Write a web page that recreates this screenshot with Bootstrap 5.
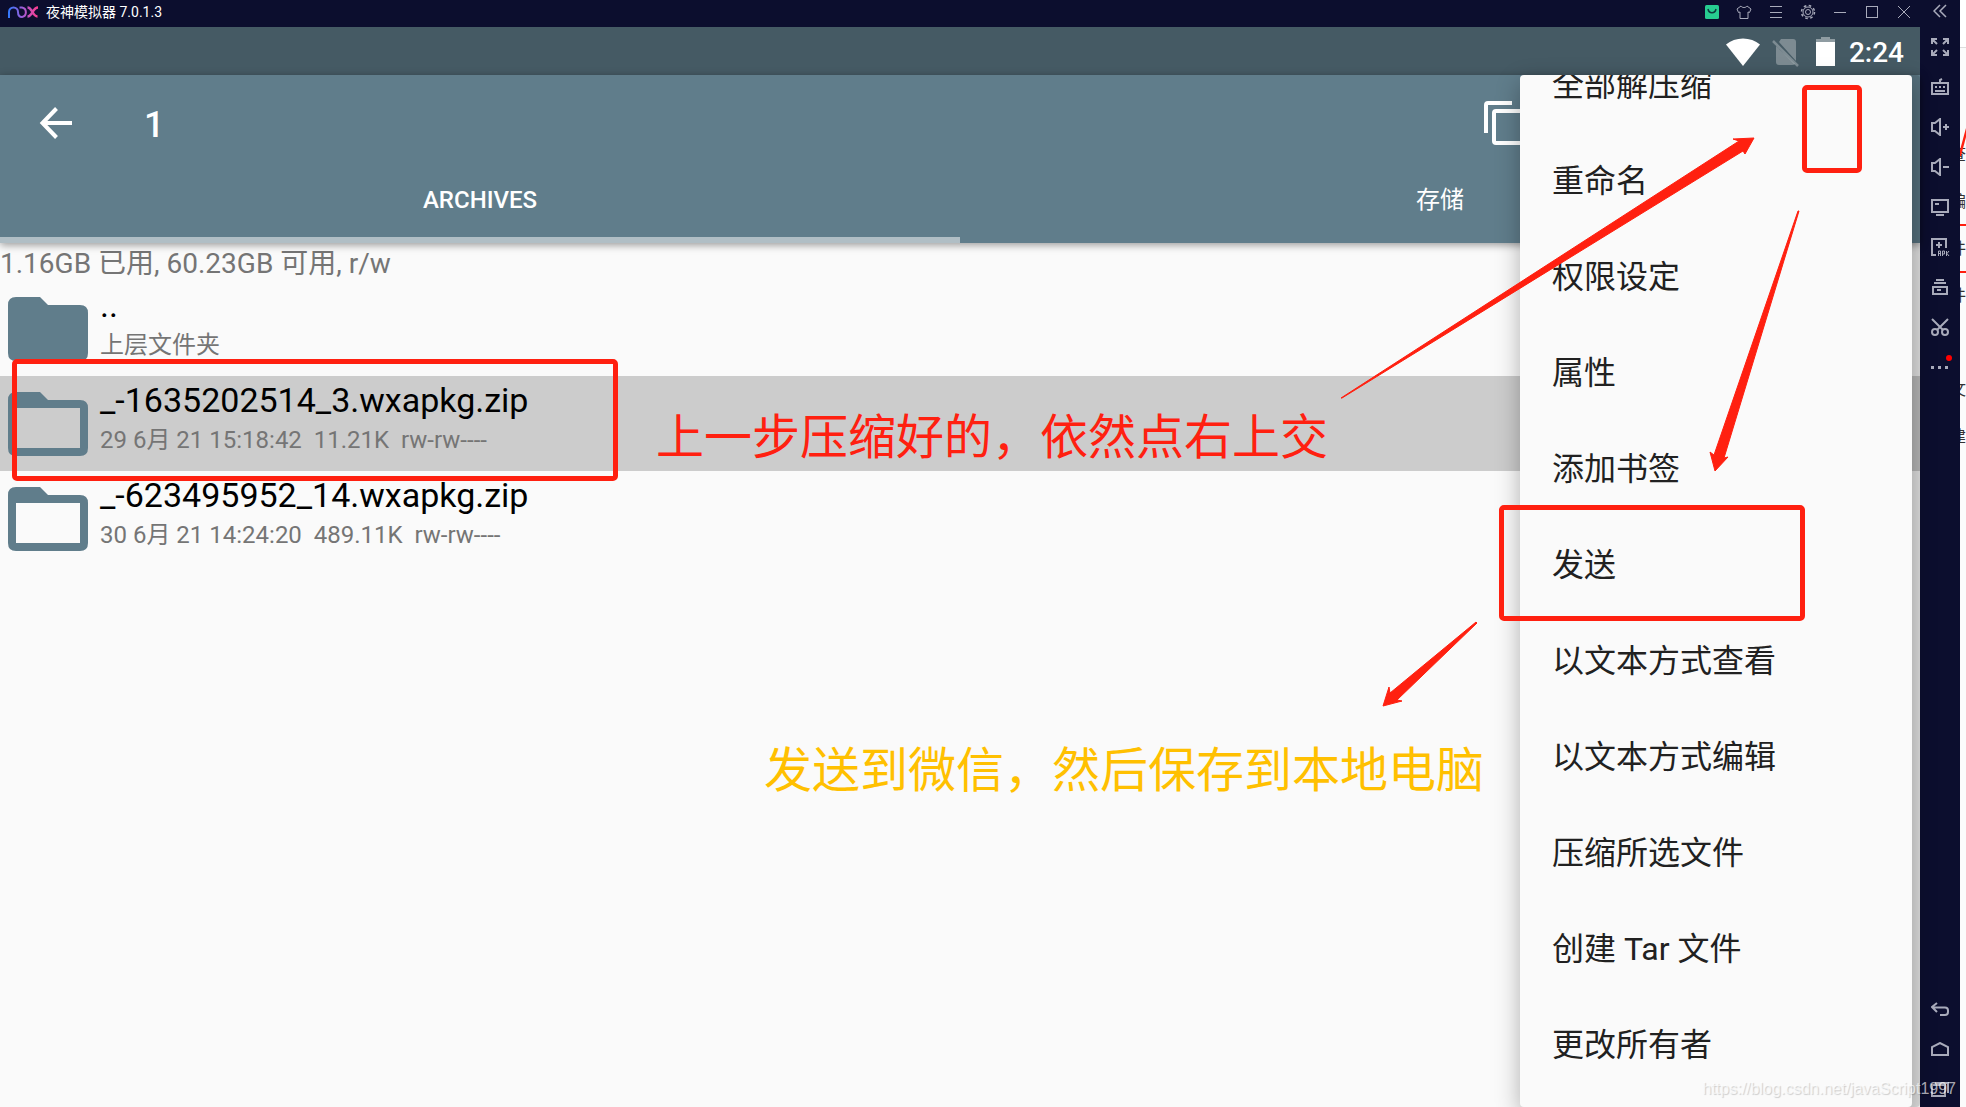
<!DOCTYPE html>
<html lang="zh-CN">
<head>
<meta charset="utf-8">
<meta name="viewport" content="width=device-width, initial-scale=1">
<title>夜神模拟器</title>
<link href="https://cdn.jsdelivr.net/npm/bootstrap@5.3.0/dist/css/bootstrap.min.css" rel="stylesheet">
<style>
:root{--navy:#0c0e2e;--slate:#607d8b;--ink:#212121;--mute:#757575;--red:#ff2010}
body{font-family:Roboto,"Noto Sans CJK SC",sans-serif;background:#fafafa;color:var(--ink)}
svg{display:block;flex:none}
button{font-family:inherit}
.bare{background:none;border:0;padding:0;color:inherit}
.emu{background:var(--navy);min-width:0}
.titlebar{height:27px;color:#fff;font-size:14px;line-height:20px;padding-left:8px;padding-bottom:4px;font-family:Roboto,"Noto Sans CJK SC",sans-serif}
.win-btn{width:32px;height:22px;color:#a9abbb;display:flex;align-items:center;justify-content:center}
.win-btn.wide{width:40px}
.statusbar{height:48px;background:#455a64;color:#fff;padding-right:16px;padding-top:2px}
.clock{font-size:28px;line-height:46px;font-weight:500;margin-left:13px;padding-top:1px}
.screen{min-height:0;background:#fafafa}
.appbar{background:var(--slate);color:#fff;box-shadow:0 2px 8px rgba(0,0,0,.4);z-index:1}
.toolbar{height:96px;padding-left:36px}
.count{font-size:36px;line-height:48px;font-weight:500;margin-left:68px;padding-top:4px}
.copy-btn{margin-left:auto;margin-right:400px}
.copy-btn svg{overflow:visible}
.tab-btn{height:72px;font-size:24px;line-height:36px;font-weight:500;padding-bottom:8px;border-bottom:6px solid transparent}
.tab-btn.plain{font-weight:400}
.tab-btn.current{border-color:#b0bec5}
.usage{font-size:28px;line-height:34px;padding-top:4px;color:var(--mute)}
.entry{height:95px;padding:0 8px;gap:12px;width:100%;text-align:left}
.entry.picked{background:#ccc}
.entry svg{margin-top:16px}
.entry-name{font-size:34px;line-height:48px;color:#000}
.entry-meta{font-size:24px;line-height:32px;color:var(--mute);white-space:pre}
.popup{position:absolute;top:0;right:8px;bottom:0;width:392px;z-index:2;border-radius:4px;background:#fafafa;
  box-shadow:8px 0 0 rgba(0,0,0,.12),0 8px 24px rgba(0,0,0,.3)}
.popup-list{padding-bottom:14px;border-radius:4px}
.popup-item{height:96px;flex:none;padding-left:32px;text-align:left;font-size:32px;line-height:48px}
.sidebar{width:40px;background:var(--navy);color:#a9abbb}
.sidebar .win-btn{margin-bottom:5px}
.side-btn{height:40px;flex:none;display:flex;align-items:center;justify-content:center;position:relative}
.side-nav{margin-top:auto;margin-bottom:-2px}
.dot{position:absolute;width:6px;height:6px;border-radius:50%;background:#f00;right:8px;top:8px}
.behind{width:6px;background:#fbfbfb;padding-top:132px;font-size:16px;line-height:45px;color:#333;position:relative}
.behind span{height:47px;border-bottom:2px solid transparent}
.behind span.ruled{border-color:var(--red)}
.behind-top{position:absolute;top:0;left:0;right:0;height:48px;background:#fff;border-bottom:1px solid #ddd}
.behind svg{position:absolute;left:0;top:128px}
.notes{position:absolute;inset:0;z-index:3;pointer-events:none}
.frame{position:absolute;border:5px solid var(--red);border-radius:5px}
.frame-file{left:12px;top:359px;width:606px;height:122px}
.frame-more{right:104px;top:85px;width:60px;height:88px}
.frame-send{right:161px;top:505px;width:306px;height:116px}
.remark{position:absolute;font-family:"Noto Sans CJK SC",sans-serif;font-size:48px;line-height:64px;white-space:nowrap}
.remark-a{left:656px;top:401px;color:var(--red)}
.remark-b{left:764px;top:734px;color:#ffc000}
.stamp{position:absolute;right:10px;bottom:7px;z-index:4;font:16px/22px "Liberation Sans",sans-serif;color:rgba(255,255,255,.65);text-shadow:1px 1px 1px rgba(0,0,0,.18);pointer-events:none}
</style>
<script src="https://cdn.jsdelivr.net/npm/bootstrap@5.3.0/dist/js/bootstrap.bundle.min.js"></script>
</head>
<body>
<div class="d-flex vh-100 overflow-hidden position-relative">
  <div class="emu flex-grow-1 d-flex flex-column">
    <header class="titlebar d-flex align-items-center">
      <svg width="30" height="12" viewBox="0 0 30 12" fill="none" stroke-width="2" aria-hidden="true">
        <defs><linearGradient id="lg" gradientUnits="userSpaceOnUse" x1="0" y1="0" x2="30" y2="0"><stop offset="0" stop-color="#2f7bff"/><stop offset=".5" stop-color="#a45cd6"/><stop offset="1" stop-color="#ff3b8d"/></linearGradient></defs>
        <path stroke="url(#lg)" d="M1 12V6a4.500 4.500 0 0 1 9 0c0 3 1 5 4 5A4.500 4.800 0 0 0 14 1.500h-2.500"/>
        <path stroke="url(#lg)" stroke-width="2.500" d="M19.500 1.500c5 0 5 9 10 9M30 1.500c-5.500 0-5.500 9-10.500 9"/>
      </svg>
      <span class="ms-2">夜神模拟器 7.0.1.3</span>
      <div class="d-flex ms-auto">
        <button class="bare win-btn" aria-label="应用商店"><svg width="14" height="14"><rect width="14" height="14" rx="1.500" fill="#27cc91"/><path d="M3 4c1 5 7 5 8 0" fill="none" stroke="#0c3a3e" stroke-width="1.500"/></svg></button>
        <button class="bare win-btn" aria-label="主题"><svg width="16" height="14" fill="none" stroke="currentColor"><path d="M5 1 1 4l1.500 3.500L4 7v6.500h8V7l1.500.500L15 4l-4-3c-1 2-5 2-6 0z"/></svg></button>
        <button class="bare win-btn" aria-label="菜单"><svg width="12" height="12" stroke="currentColor"><path d="M0 .5h12M0 6.500h12M0 11.500h12"/></svg></button>
        <button class="bare win-btn" aria-label="设置"><svg width="16" height="16" fill="none" stroke="currentColor"><circle cx="8" cy="8" r="2.500"/><circle cx="8" cy="8" r="5"/><circle cx="8" cy="8" r="6.500" stroke-width="1.500" stroke-dasharray="2.600 2.500"/></svg></button>
        <button class="bare win-btn" aria-label="最小化"><svg width="12" height="12" stroke="currentColor"><path d="M0 6.500h12"/></svg></button>
        <button class="bare win-btn" aria-label="最大化"><svg width="12" height="12" fill="none" stroke="currentColor"><rect x=".5" y=".5" width="11" height="11"/></svg></button>
        <button class="bare win-btn" aria-label="关闭"><svg width="12" height="12" stroke="currentColor"><path d="M0 0l12 12M12 0 0 12"/></svg></button>
      </div>
    </header>
    <div class="statusbar d-flex align-items-center justify-content-end">
      <svg width="34" height="28"><path fill="#fff" d="M0 6.500C9-1.500 25-1.500 34 6.500L17 28z"/></svg>
      <svg class="ms-2 me-3" width="32" height="30" viewBox="-4 0 32 30"><path fill="#fff" fill-opacity=".3" d="M9 2h12q3 0 3 3v19L7 5zM4 9l19 18q-1 1-3 1H7q-3 0-3-3z"/><path stroke="#fff" stroke-opacity=".3" stroke-width="2.500" d="M1 4l25 25"/></svg>
      <svg width="20" height="30"><path fill="#fff" fill-opacity=".4" d="M5 0h9v2h5v4H0V2h5z"/><path fill="#fff" d="M0 5h19v24H0z"/></svg>
      <span class="clock">2:24</span>
    </div>
    <main class="screen flex-grow-1 position-relative d-flex flex-column">
      <div class="appbar">
        <div class="toolbar d-flex align-items-center">
          <button class="bare" aria-label="返回"><svg width="40" height="36" fill="none" stroke="#fff" stroke-width="4"><path d="M20.500 3.500 6.500 18l14 14.500M6 18h30"/></svg></button>
          <span class="count">1</span>
          <button class="bare copy-btn" aria-label="复制"><svg width="44" height="48" fill="none" stroke="#fff" stroke-width="4"><path d="M36 4H12q-2 0-2 2v28"/><rect x="18" y="12" width="28" height="32" rx="2"/></svg></button>
        </div>
        <nav class="d-flex">
          <button class="bare tab-btn current w-50">ARCHIVES</button>
          <button class="bare tab-btn plain w-50">存储</button>
        </nav>
      </div>
      <div class="usage">1.16GB 已用, 60.23GB 可用, r/w</div>
      <button class="bare entry d-flex">
        <svg width="80" height="64" fill="#607d8b"><path d="M8 0h24l8 8h32q8 0 8 8v40q0 8-8 8H8q-8 0-8-8V8q0-8 8-8z"/></svg>
        <span class="d-flex flex-column"><span class="entry-name">..</span><span class="entry-meta">上层文件夹</span></span>
      </button>
      <button class="bare entry picked d-flex">
        <svg width="80" height="64" fill="#607d8b" fill-rule="evenodd"><path d="M8 0h24l8 8h32q8 0 8 8v40q0 8-8 8H8q-8 0-8-8V8q0-8 8-8zM8 16v40h64V16z"/></svg>
        <span class="d-flex flex-column"><span class="entry-name">_-1635202514_3.wxapkg.zip</span><span class="entry-meta">29 6月 21 15:18:42  11.21K  rw-rw----</span></span>
      </button>
      <button class="bare entry d-flex">
        <svg width="80" height="64" fill="#607d8b" fill-rule="evenodd"><path d="M8 0h24l8 8h32q8 0 8 8v40q0 8-8 8H8q-8 0-8-8V8q0-8 8-8zM8 16v40h64V16z"/></svg>
        <span class="d-flex flex-column"><span class="entry-name">_-623495952_14.wxapkg.zip</span><span class="entry-meta">30 6月 21 14:24:20  489.11K  rw-rw----</span></span>
      </button>
      <div class="popup">
        <div class="popup-list h-100 d-flex flex-column justify-content-end overflow-hidden">
          <button class="bare popup-item">全部解压缩</button>
          <button class="bare popup-item">重命名</button>
          <button class="bare popup-item">权限设定</button>
          <button class="bare popup-item">属性</button>
          <button class="bare popup-item">添加书签</button>
          <button class="bare popup-item">发送</button>
          <button class="bare popup-item">以文本方式查看</button>
          <button class="bare popup-item">以文本方式编辑</button>
          <button class="bare popup-item">压缩所选文件</button>
          <button class="bare popup-item">创建 Tar 文件</button>
          <button class="bare popup-item">更改所有者</button>
        </div>
      </div>
    </main>
  </div>
  <aside class="sidebar d-flex flex-column">
    <button class="bare win-btn wide" aria-label="收起"><svg width="14" height="14" fill="none" stroke="currentColor" stroke-width="1.500"><path d="M7 1 1 7l6 6M13 1 7 7l6 6"/></svg></button>
    <button class="bare side-btn" aria-label="全屏"><svg width="18" height="18" fill="none" stroke="currentColor" stroke-width="2"><path d="M1 6V1h5M12 1h5v5M17 12v5h-5M6 17H1v-5M1 1l5 5M17 1l-5 5M17 17l-5-5M1 17l5-5"/></svg></button>
    <button class="bare side-btn" aria-label="键盘"><svg width="18" height="18" fill="none" stroke="currentColor" stroke-width="2"><path d="M1 5h16v11H1zM9 4V2l2-1M4 9h2M8 9h2M12 9h2M4 13h10"/></svg></button>
    <button class="bare side-btn" aria-label="音量加"><svg width="18" height="18" fill="none" stroke="currentColor" stroke-width="2"><path d="M1 5h3l5-4v16l-5-4H1zM12 9h6M15 6v6"/></svg></button>
    <button class="bare side-btn" aria-label="音量减"><svg width="18" height="18" fill="none" stroke="currentColor" stroke-width="2"><path d="M1 5h3l5-4v16l-5-4H1zM12 9h6"/></svg></button>
    <button class="bare side-btn" aria-label="显示"><svg width="18" height="18" fill="none" stroke="currentColor" stroke-width="2"><path d="M1 2h16v12H1zM4 6h4M5 17h8"/></svg></button>
    <button class="bare side-btn" aria-label="安装 APK"><svg width="20" height="20" fill="none" stroke="currentColor" stroke-width="2"><path d="M6 18H2V2h14v9M9 5v6M6 8h6"/><path stroke-width="1" d="M8.500 19v-5h2v5M8.500 16.500h2M12.500 19v-5h2v3h-2M16.500 14v5M19 14l-2 2.500 2 2.500"/></svg></button>
    <button class="bare side-btn" aria-label="多开"><svg width="18" height="18" fill="none" stroke="currentColor" stroke-width="2"><path d="M5 2h8M3 5h12M2 9h14v7H2zM6 12h4"/></svg></button>
    <button class="bare side-btn" aria-label="截图"><svg width="18" height="18" fill="none" stroke="currentColor" stroke-width="2"><circle cx="4" cy="14" r="3"/><circle cx="14" cy="14" r="3"/><path d="M1 1l11 11M17 1 6 12"/></svg></button>
    <button class="bare side-btn" aria-label="更多"><svg width="18" height="3" fill="currentColor"><path d="M0 0h3v3H0zM7 0h3v3H7zM14 0h3v3h-3z"/></svg><span class="dot"></span></button>
    <div class="side-nav d-flex flex-column">
      <button class="bare side-btn" aria-label="返回"><svg width="18" height="14" fill="none" stroke="currentColor" stroke-width="2"><path d="M6 1 1 5l5 5M1 5.500h13q3 0 3 3V10q0 3-3 3h-5"/></svg></button>
      <button class="bare side-btn" aria-label="主页"><svg width="18" height="14" fill="none" stroke="currentColor" stroke-width="2"><path d="M1 13V5l8-4 8 4v8z"/></svg></button>
      <button class="bare side-btn" aria-label="最近任务"><svg width="18" height="16" fill="none" stroke="currentColor" stroke-width="2"><path d="M1 4h13v11H1zM4 2h13v10"/></svg></button>
    </div>
  </aside>
  <div class="behind d-flex flex-column align-items-end overflow-hidden" aria-hidden="true">
    <div class="behind-top"></div>
    <span>查</span><span class="ruled">编</span><span class="ruled">件</span><span>件</span><span></span><span>文</span><span>建</span>
    <svg width="6" height="28"><path d="M6 0v9L1 28H0V22z" fill="#ff2010"/></svg>
  </div>
  <div class="notes">
    <svg width="100%" height="100%" fill="#ff2010" stroke="#ff2010" stroke-linejoin="round" aria-hidden="true">
      <path d="M1341 398 1739 141 1733 139 1754 138 1745 154 1743 151 1342 398z"/>
      <path d="M1798 211 1714 455 1710 452 1715 471 1728 457 1724 458 1799 211z"/>
      <path d="M1476 622 1390 693 1389 687 1383 706 1402 701 1397 700 1477 623z"/>
    </svg>
    <div class="frame frame-file"></div>
    <div class="frame frame-more"></div>
    <div class="frame frame-send"></div>
    <div class="remark remark-a">上一步压缩好的，依然点右上交</div>
    <div class="remark remark-b">发送到微信，然后保存到本地电脑</div>
  </div>
  <div class="stamp">https://blog.csdn.net/javaScript1997</div>
</div>
</body>
</html>
